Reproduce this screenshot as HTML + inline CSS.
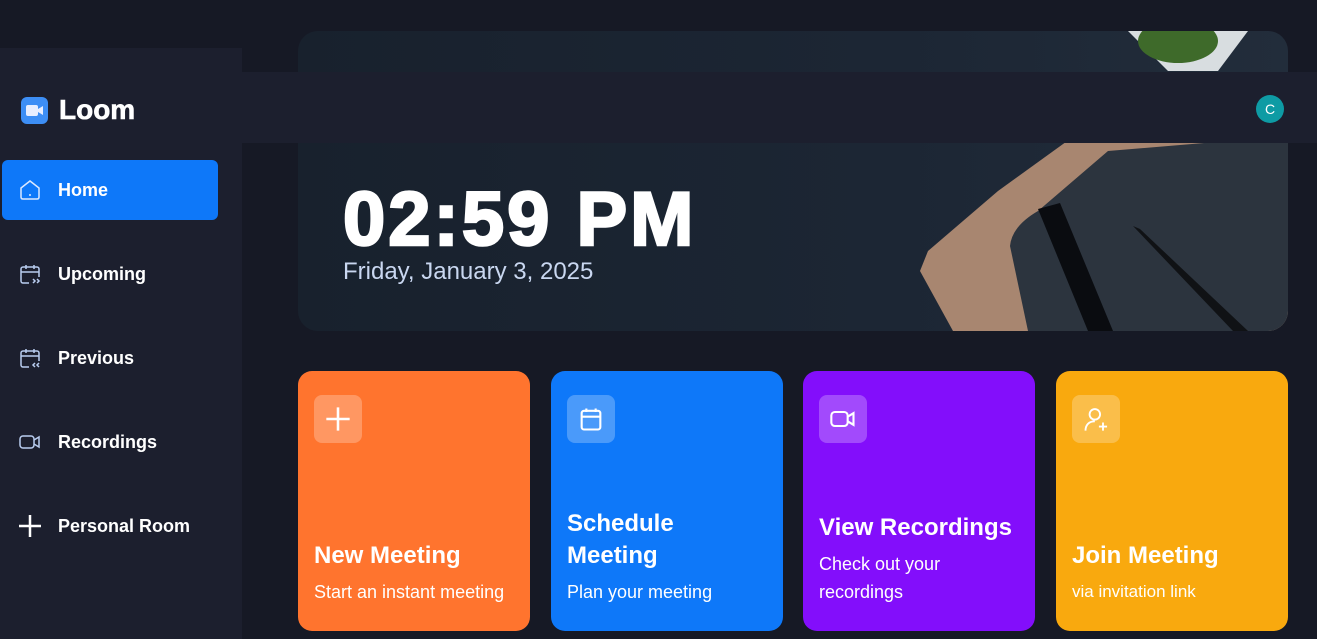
<!DOCTYPE html>
<html><head><meta charset="utf-8"><style>
*{margin:0;padding:0;box-sizing:border-box}
body{width:1317px;height:639px;background:#161925;font-family:"Liberation Sans",sans-serif;position:relative;overflow:hidden;color:#fff}
.side{position:absolute;left:0;top:48px;width:242px;height:591px;background:#1c1f2e}
.nav{position:absolute;left:242px;top:72px;width:1075px;height:71px;background:#1c1f2e;z-index:3}
.logo{position:absolute;left:21px;top:94px;display:flex;align-items:center;gap:11px;font-weight:bold;font-size:28px;-webkit-text-stroke:0.6px #fff;z-index:4}
.item{position:absolute;left:2px;width:216px;height:60px;border-radius:6px;display:flex;align-items:center;padding-left:16px;gap:16px;font-weight:bold;font-size:18px}
.item svg{width:24px;height:24px}
.hero{position:absolute;left:298px;top:31px;width:990px;height:300px;border-radius:20px;overflow:hidden;background:linear-gradient(90deg,#18212d,#1c2634 60%,#222d3b)}
.time{position:absolute;left:343px;top:176px;font-size:76px;font-weight:900;letter-spacing:3px;-webkit-text-stroke:2.5px #fff;z-index:2}
.date{position:absolute;left:343px;top:258px;font-size:24px;color:#c9d7f0;z-index:2}
.card{position:absolute;top:371px;width:232px;height:260px;border-radius:14px;padding:0 16px}
.ic{position:absolute;left:16px;top:24px;width:48px;height:48px;border-radius:8px;background:rgba(255,255,255,.25);display:flex;align-items:center;justify-content:center}
.t{position:absolute;left:16px;font-size:24px;font-weight:bold;line-height:32px}
.s{position:absolute;left:16px;font-size:18px;line-height:28px}
.av{position:absolute;left:1256px;top:95px;width:28px;height:28px;border-radius:50%;background:#0e9ba4;font-size:14px;display:flex;align-items:center;justify-content:center;z-index:4}
</style></head><body>
<div class="side"></div>
<div class="hero">
<svg width="990" height="300" style="position:absolute;left:0;top:0">
<path d="M795 0 L830 0 L870 40 L920 40 L950 0 Z" fill="#d8dde0"/>
<ellipse cx="880" cy="10" rx="40" ry="22" fill="#3e6a2a"/>
<path d="M655 300 L622 240 L630 220 L700 160 L790 95 L990 95 L990 300 Z" fill="#a88670"/>
<path d="M730 300 L712 215 Q714 195 740 180 L810 120 L990 105 L990 300 Z" fill="#2c343e"/>
<path d="M740 178 L762 172 L815 300 L790 300 Z" fill="#0a0c10"/>
<path d="M835 195 L842 198 L950 300 L935 300 Z" fill="#101215"/>
</svg>
</div>
<div class="nav"></div>
<div class="logo"><svg width="27" height="27" viewBox="0 0 27 27"><rect width="27" height="27" rx="6" fill="#3d8ef5"/><rect x="5" y="8" width="12" height="11" rx="2" fill="#e8eeff"/><path d="M17 12 L22 9 V18 L17 15Z" fill="#e8eeff"/></svg>Loom</div>
<div class="av">C</div>
<div class="time">02:59 PM</div>
<div class="date">Friday, January 3, 2025</div>

<div class="item" style="top:160px;background:#0e78f9"><svg viewBox="0 0 24 24" fill="none" stroke="#dbe8ff" stroke-width="1.5"><path d="M3 10 L12 3 L21 10 V19 Q21 21 19 21 H5 Q3 21 3 19Z"/><path d="M12 16v2"/></svg>Home</div>
<div class="item" style="top:244px"><svg viewBox="0 0 24 24" fill="none" stroke="#b9cdf0" stroke-width="1.5"><path d="M11 21H5a2 2 0 0 1-2-2V7a2 2 0 0 1 2-2h14a2 2 0 0 1 2 2v8M3 10h18M8 3v4M16 3v4M15 17l2 2-2 2M19 17l2 2-2 2"/></svg>Upcoming</div>
<div class="item" style="top:328px"><svg viewBox="0 0 24 24" fill="none" stroke="#b9cdf0" stroke-width="1.5"><path d="M11 21H5a2 2 0 0 1-2-2V7a2 2 0 0 1 2-2h14a2 2 0 0 1 2 2v8M3 10h18M8 3v4M16 3v4M17 17l-2 2 2 2M21 17l-2 2 2 2"/></svg>Previous</div>
<div class="item" style="top:412px"><svg viewBox="0 0 24 24" fill="none" stroke="#b9cdf0" stroke-width="1.5"><rect x="2" y="6" width="14" height="12" rx="3"/><path d="M16 10l5-3v10l-5-3"/></svg>Recordings</div>
<div class="item" style="top:496px"><svg viewBox="0 0 24 24" fill="none" stroke="#fff" stroke-width="2.5"><path d="M12 1v22M1 12h22"/></svg>Personal Room</div>

<div class="card" style="left:298px;background:#ff742e"><div class="ic"><svg width="28" height="28" viewBox="0 0 24 24" fill="none" stroke="#fff" stroke-width="2.2"><path d="M12 2v20M2 12h20"/></svg></div><div class="t" style="top:169px">New Meeting</div><div class="s" style="top:207px">Start an instant meeting</div></div>
<div class="card" style="left:551px;background:#0e78f9"><div class="ic"><svg width="28" height="28" viewBox="0 0 24 24" fill="none" stroke="#fff" stroke-width="1.8"><rect x="4" y="5" width="16" height="16" rx="2"/><path d="M4 10h16M8 3v3M16 3v3"/></svg></div><div class="t" style="top:137px">Schedule<br>Meeting</div><div class="s" style="top:207px">Plan your meeting</div></div>
<div class="card" style="left:803px;background:#830efb"><div class="ic"><svg width="28" height="28" viewBox="0 0 24 24" fill="none" stroke="#fff" stroke-width="1.8"><rect x="2" y="6" width="14" height="12" rx="3"/><path d="M16 10l5-3v10l-5-3"/></svg></div><div class="t" style="top:141px">View Recordings</div><div class="s" style="top:179px">Check out your<br>recordings</div></div>
<div class="card" style="left:1056px;background:#f9a90e"><div class="ic"><svg width="28" height="28" viewBox="0 0 24 24" fill="none" stroke="#fff" stroke-width="1.6"><circle cx="11" cy="8" r="4.5"/><path d="M3 22c0-5 3-8 8-8M18 15v7M14.5 18.5h7"/></svg></div><div class="t" style="top:169px">Join Meeting</div><div class="s" style="top:207px;font-size:17px">via invitation link</div></div>
</body></html>
